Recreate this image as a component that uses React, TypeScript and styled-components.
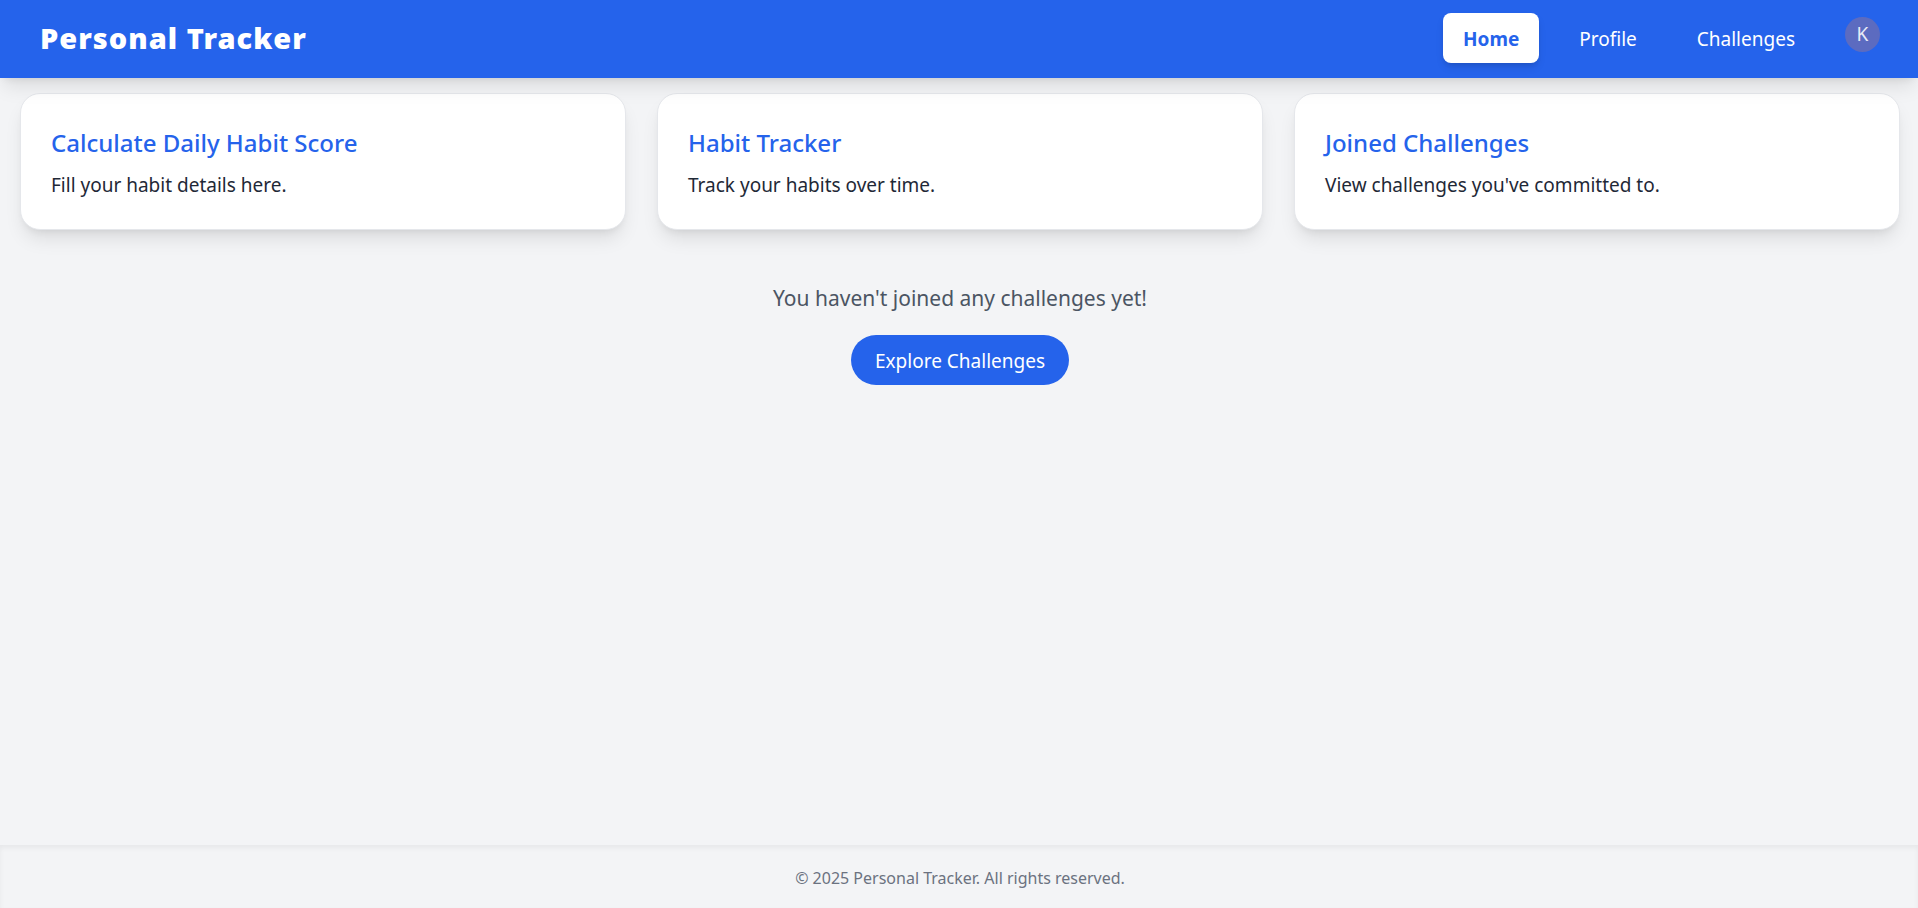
import React from "react";
import styled, { createGlobalStyle } from "styled-components";

const colors = {
  blue: "#2563eb",
  page: "#f3f4f6",
  border: "#e5e7eb",
  ink: "#1f2937",
  muted: "#4b5563",
  faint: "#6b7280",
};

const GlobalStyle = createGlobalStyle`
  *, *::before, *::after { box-sizing: border-box; }
  body {
    margin: 0;
    background: ${colors.page};
    color: ${colors.ink};
    font-family: "Segoe UI", "Noto Sans", "Open Sans", sans-serif;
    font-size: 19px;
    line-height: 30px;
  }
  h1, h2, p { margin: 0; }
`;

const Page = styled.div`
  display: flex;
  flex-direction: column;
  min-height: 100vh;
`;

const Header = styled.header`
  position: sticky;
  top: 0;
  z-index: 10;
  display: flex;
  align-items: center;
  justify-content: space-between;
  padding: 13px 38px 15px 40px;
  background: ${colors.blue};
  color: #fff;
  box-shadow: 0 12px 19px -4px rgba(0, 0, 0, 0.1), 0 5px 8px -5px rgba(0, 0, 0, 0.1);
`;

const Brand = styled.h1`
  font-size: 29px;
  line-height: 40px;
  font-weight: 900;
  letter-spacing: 1px;
`;

const Nav = styled.nav`
  display: flex;
  align-items: center;
  gap: 20px;
`;

const NavLink = styled.a<{ $active?: boolean }>`
  padding: 11px 20px 9px;
  border-radius: 8px;
  color: ${(p) => (p.$active ? colors.blue : "#fff")};
  background: ${(p) => (p.$active ? "#fff" : "transparent")};
  font-weight: ${(p) => (p.$active ? 700 : 400)};
  text-decoration: none;
  box-shadow: ${(p) =>
    p.$active ? "0 5px 8px -1px rgba(0, 0, 0, 0.1), 0 3px 5px -2px rgba(0, 0, 0, 0.1)" : "none"};
`;

const Account = styled.div`
  display: flex;
  padding: 0 0 8px 10px;
`;

const Avatar = styled.button`
  width: 35px;
  height: 35px;
  padding: 0;
  border: 0;
  border-radius: 50%;
  background: #5c6bc0;
  color: #e8eaf6;
  font: 400 19px/35px "Noto Sans", sans-serif;
  cursor: pointer;
`;

const Main = styled.main`
  flex: 1;
  padding: 15px 18px 15px 20px;
`;

const Cards = styled.section`
  display: grid;
  grid-template-columns: repeat(auto-fit, minmax(320px, 1fr));
  gap: 31px;
`;

const Card = styled.article`
  padding: 30px 30px 29px;
  border: 1px solid ${colors.border};
  border-radius: 20px;
  background: #fff;
  box-shadow: 0 12px 19px -4px rgba(0, 0, 0, 0.1), 0 5px 8px -5px rgba(0, 0, 0, 0.1);
`;

const CardTitle = styled.h2`
  margin-bottom: 8px;
  color: ${colors.blue};
  font-size: 24px;
  line-height: 38px;
  font-weight: 500;
`;

const Empty = styled.section`
  display: flex;
  flex-direction: column;
  align-items: center;
  gap: 19px;
  padding-top: 50px;
`;

const EmptyText = styled.p`
  color: ${colors.muted};
  font-size: 21px;
  line-height: 36px;
`;

const ExploreButton = styled.button`
  padding: 11px 24px 9px;
  border: 0;
  border-radius: 25px;
  background: ${colors.blue};
  color: #fff;
  font: inherit;
  cursor: pointer;
`;

const Footer = styled.footer`
  padding: 21px 18px 17px 20px;
  color: ${colors.faint};
  font-size: 16px;
  line-height: 25px;
  text-align: center;
  box-shadow: inset 0 3px 5px rgba(0, 0, 0, 0.05);
`;

const links = ["Home", "Profile", "Challenges"];

const cards = [
  { title: "Calculate Daily Habit Score", text: "Fill your habit details here." },
  { title: "Habit Tracker", text: "Track your habits over time." },
  { title: "Joined Challenges", text: "View challenges you've committed to." },
];

export default function App() {
  return (
    <Page>
      <GlobalStyle />
      <Header>
        <Brand>Personal Tracker</Brand>
        <Nav>
          {links.map((label) => (
            <NavLink key={label} href={`#${label.toLowerCase()}`} $active={label === "Home"}>
              {label}
            </NavLink>
          ))}
          <Account>
            <Avatar type="button">K</Avatar>
          </Account>
        </Nav>
      </Header>
      <Main>
        <Cards>
          {cards.map((card) => (
            <Card key={card.title}>
              <CardTitle>{card.title}</CardTitle>
              <p>{card.text}</p>
            </Card>
          ))}
        </Cards>
        <Empty>
          <EmptyText>You haven't joined any challenges yet!</EmptyText>
          <ExploreButton type="button">Explore Challenges</ExploreButton>
        </Empty>
      </Main>
      <Footer>© 2025 Personal Tracker. All rights reserved.</Footer>
    </Page>
  );
}
